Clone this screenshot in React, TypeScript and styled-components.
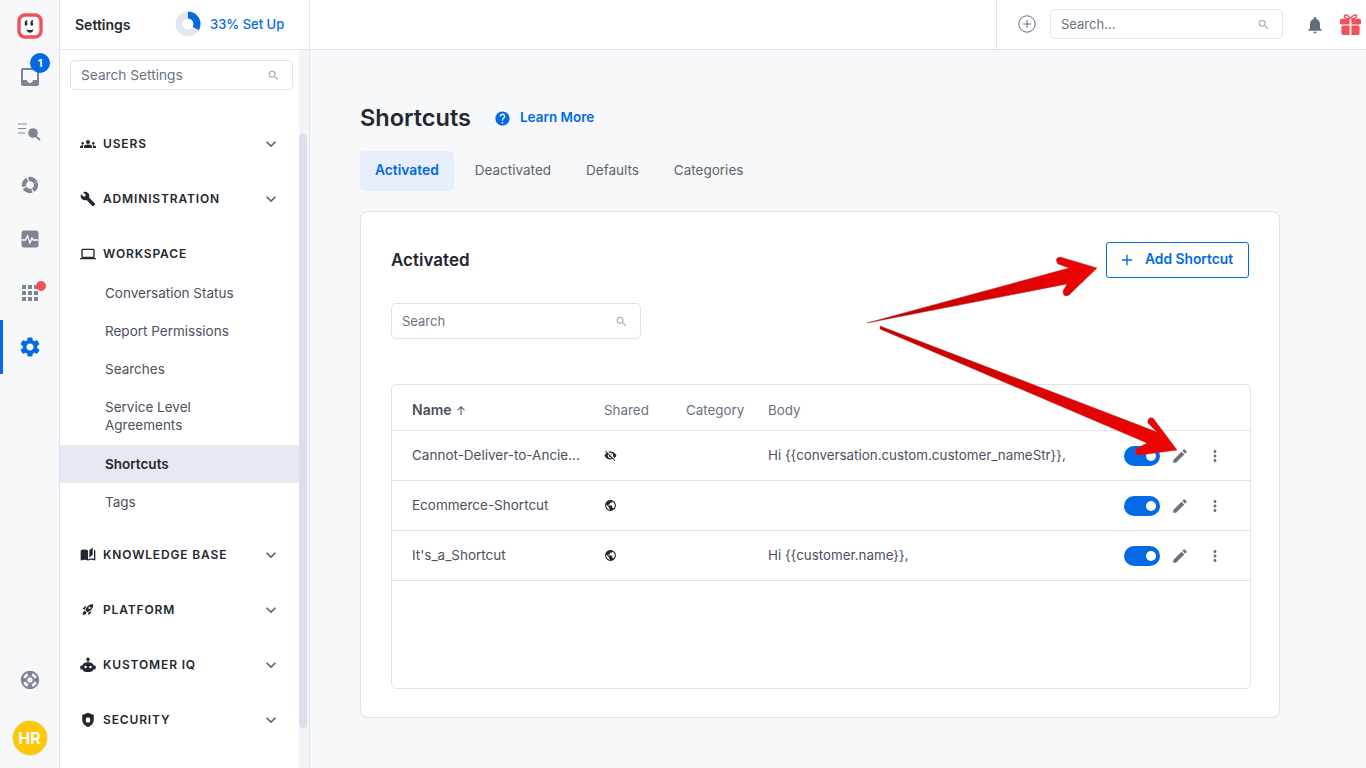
import React from 'react';
import styled, { createGlobalStyle } from 'styled-components';
import {
  MdApps,
  MdAutoStories,
  MdBuild,
  MdEdit,
  MdExpandMore,
  MdGroups,
  MdHelp,
  MdInbox,
  MdLaptop,
  MdMoreVert,
  MdNotifications,
  MdPublic,
  MdRocketLaunch,
  MdSearch,
  MdSettings,
  MdSupport,
  MdVisibilityOff,
} from 'react-icons/md';

const GlobalStyle = createGlobalStyle`
  html, body {
    margin: 0;
    padding: 0;
    height: 100%;
    overflow: hidden;
  }
  body {
    font-family: Inter, "Noto Sans", "Liberation Sans", sans-serif;
    background: #f7f8fa;
    color: #23272f;
  }
  * { box-sizing: border-box; }
`;

const BLUE = '#0369e5';
const CORAL = '#f4505a';

const rows = [
  { name: 'Cannot-Deliver-to-Ancie...', hidden: true, body: 'Hi {{conversation.custom.customer_nameStr}},' },
  { name: 'Ecommerce-Shortcut', hidden: false, body: '' },
  { name: "It's_a_Shortcut", hidden: false, body: 'Hi {{customer.name}},' },
];

const App: React.FC = () => {
  return (
    <Page>
      <GlobalStyle />
      <Rail>
        <RailTop>
          <Logo viewBox="0 0 26 26">
            <rect x="2" y="2" width="22" height="22" rx="6" fill="#fff" stroke={CORAL} strokeWidth="3.400" />
            <path d="M7.800 10c0-1.700 1-2.800 2.500-3v1.500c-.5.100-.8.400-.8.900h.8v3H7.800zM13.500 10c0-1.700 1-2.800 2.500-3v1.500c-.5.100-.8.400-.8.900h.8v3h-2.500z" fill="#23272f" />
            <path d="M9.500 16.500c2.200.8 4.800.8 7 0-.3 2-1.700 3.200-3.500 3.200s-3.200-1.200-3.500-3.200z" fill="#23272f" />
          </Logo>
          <RailItem>
            <MdInbox size={24} />
            <CountBadge>1</CountBadge>
          </RailItem>
          <RailItem>
            <RailSvg $w={24} $h={20} viewBox="0 0 24 20">
              <path d="M0 3h9M0 7.500h8M0 12h7" stroke="#7d8594" strokeWidth="1" fill="none" />
              <circle cx="15" cy="12" r="4.800" fill="#7d8594" />
              <path d="M18 15.500l4 3.500" stroke="#7d8594" strokeWidth="1.800" fill="none" />
            </RailSvg>
          </RailItem>
          <RailItem>
            <RailSvg $w={20} $h={20} viewBox="0 0 20 20">
              <circle cx="10" cy="10" r="6" fill="none" stroke="#7d8594" strokeWidth="4.400" strokeDasharray="8 1.420" transform="rotate(-20 10 10)" />
            </RailSvg>
          </RailItem>
          <RailItem>
            <RailSvg $w={18} $h={18} viewBox="0 0 18 18">
              <rect x="0.500" y="0.500" width="17" height="17" rx="2.500" fill="#7d8594" />
              <path d="M1 10h3.500l2-4 2.500 7 2-5 1.200 2H17" fill="none" stroke="#fff" strokeWidth="1.300" />
            </RailSvg>
          </RailItem>
          <RailItem>
            <MdApps size={24} />
            <RedDot />
          </RailItem>
          <RailItem $active><MdSettings size={24} /></RailItem>
        </RailTop>
        <RailBottom>
          <MdSupport size={22} color="#7d8594" />
          <Avatar>HR</Avatar>
        </RailBottom>
      </Rail>

      <SettingsPanel>
        <PanelHeader>
          <PanelTitle>Settings</PanelTitle>
          <Progress viewBox="0 0 26 26">
            <circle cx="13" cy="13" r="9" fill="none" stroke="#e3e7ef" strokeWidth="7" />
            <circle cx="13" cy="13" r="9" fill="none" stroke={BLUE} strokeWidth="7" strokeDasharray="18.700 56.500" transform="rotate(-90 13 13)" />
          </Progress>
          <SetupLink>33% Set Up</SetupLink>
        </PanelHeader>
        <PanelBody>
          <NavColumn>
            <SearchBox $width="223px" $height="30px" $margin="10px 0 0 10px" $size="13.7px">
              <span>Search Settings</span>
              <MdSearch size={13} color="#a3a9b5" />
            </SearchBox>
            <Nav>
              <NavHead><MdGroups size={18} /><span>USERS</span><MdExpandMore size={20} /></NavHead>
              <NavHead><MdBuild size={16} /><span>ADMINISTRATION</span><MdExpandMore size={20} /></NavHead>
              <NavHead><MdLaptop size={18} /><span>WORKSPACE</span></NavHead>
              <SubNav>
                <SubItem>Conversation Status</SubItem>
                <SubItem>Report Permissions</SubItem>
                <SubItem>Searches</SubItem>
                <SubItem $tall>Service Level<br />Agreements</SubItem>
                <SubItem $active>Shortcuts</SubItem>
                <SubItem>Tags</SubItem>
              </SubNav>
              <NavHead><MdAutoStories size={17} /><span>KNOWLEDGE BASE</span><MdExpandMore size={20} /></NavHead>
              <NavHead><MdRocketLaunch size={13} /><span>PLATFORM</span><MdExpandMore size={20} /></NavHead>
              <NavHead>
                <NavSvg viewBox="0 0 16 16">
                  <circle cx="8" cy="2.200" r="1.700" fill="#23272f" />
                  <rect x="7.400" y="3" width="1.200" height="3" fill="#23272f" />
                  <rect x="2" y="5.500" width="12" height="9.500" rx="4.400" fill="#23272f" />
                  <rect x="0.300" y="8.500" width="2.200" height="4" rx="1" fill="#23272f" />
                  <rect x="13.500" y="8.500" width="2.200" height="4" rx="1" fill="#23272f" />
                  <circle cx="5.600" cy="10" r="1.200" fill="#fff" />
                  <circle cx="10.400" cy="10" r="1.200" fill="#fff" />
                </NavSvg>
                <span>KUSTOMER IQ</span>
                <MdExpandMore size={20} />
              </NavHead>
              <NavHead>
                <NavSvg viewBox="0 0 16 16">
                  <path d="M8 .8l5.800 2.100v4.700c0 3.600-2.400 6.200-5.800 7.600-3.400-1.400-5.800-4-5.800-7.600V2.900z" fill="#23272f" />
                  <rect x="5.800" y="5.600" width="4.400" height="5" rx="1.500" fill="#fff" />
                </NavSvg>
                <span>SECURITY</span>
                <MdExpandMore size={20} />
              </NavHead>
            </Nav>
          </NavColumn>
          <ScrollTrack>
            <ScrollThumb />
          </ScrollTrack>
        </PanelBody>
      </SettingsPanel>

      <Main>
        <TopBar>
          <TopActions>
            <PlusCircle viewBox="0 0 18 18">
              <circle cx="9" cy="9" r="8.200" fill="none" stroke="#6b7280" strokeWidth="1" />
              <path d="M9 5v8M5 9h8" stroke="#6b7280" strokeWidth="1" />
            </PlusCircle>
            <SearchBox $width="233px" $height="30px">
              <span>Search...</span>
              <MdSearch size={13} color="#a3a9b5" />
            </SearchBox>
            <BellSlot><MdNotifications size={20} color="#626a7c" /></BellSlot>
            <GiftIcon viewBox="0 0 22 22">
              <path d="M11 5C9 1 5 0 4.500 2S8 5 11 5zM11 5c2-4 6-5 6.500-3S14 5 11 5z" fill="none" stroke={CORAL} strokeWidth="1.500" />
              <rect x="0" y="5" width="22" height="6" rx="1.500" fill={CORAL} />
              <rect x="1.500" y="12" width="19" height="10" rx="1.800" fill={CORAL} />
              <rect x="10" y="5" width="2" height="17" fill="#fff" />
            </GiftIcon>
          </TopActions>
        </TopBar>

        <Content>
          <TitleRow>
            <PageTitle>Shortcuts</PageTitle>
            <MdHelp size={17} color={BLUE} />
            <LearnMore>Learn More</LearnMore>
          </TitleRow>
          <Tabs>
            <Tab $active>Activated</Tab>
            <Tab>Deactivated</Tab>
            <Tab>Defaults</Tab>
            <Tab>Categories</Tab>
          </Tabs>

          <Card>
            <CardHead>
              <CardTitle>Activated</CardTitle>
              <AddButton>
                <PlusGlyph viewBox="0 0 14 14">
                  <path d="M7 1v12M1 7h12" stroke={BLUE} strokeWidth="1.600" />
                </PlusGlyph>
                Add Shortcut
              </AddButton>
            </CardHead>
            <SearchBox $width="250px" $height="36px" $margin="25px 0 0">
              <span>Search</span>
              <MdSearch size={13} color="#a3a9b5" />
            </SearchBox>

            <TableBox>
              <HeadRow>
                <NameHead>Name <SortArrow>↑</SortArrow></NameHead>
                <HeadCell $width="82px">Shared</HeadCell>
                <HeadCell $width="82px">Category</HeadCell>
                <HeadCell>Body</HeadCell>
              </HeadRow>
              {rows.map((row) => (
                <Row key={row.name}>
                  <NameCell>{row.name}</NameCell>
                  <SharedCell>
                    {row.hidden ? <MdVisibilityOff size={13} /> : <MdPublic size={13} />}
                  </SharedCell>
                  <CategoryCell />
                  <BodyCell>{row.body}</BodyCell>
                  <Toggle><Knob /></Toggle>
                  <EditIcon><MdEdit size={18} /></EditIcon>
                  <MoreIcon><MdMoreVert size={18} /></MoreIcon>
                </Row>
              ))}
            </TableBox>
          </Card>
        </Content>
      </Main>

      <Arrows viewBox="0 0 1366 768">
        <defs>
          <linearGradient id="arrowTop" x1="867" y1="324" x2="1100" y2="260" gradientUnits="userSpaceOnUse">
            <stop offset="0" stopColor="#c00000" />
            <stop offset="1" stopColor="#f00404" />
          </linearGradient>
          <linearGradient id="arrowBottom" x1="880" y1="328" x2="1180" y2="450" gradientUnits="userSpaceOnUse">
            <stop offset="0" stopColor="#c40000" />
            <stop offset="1" stopColor="#f00404" />
          </linearGradient>
        </defs>
        <path
          d="M867 323 L1069 268 L1058 264 Q1054 258 1060 257 L1097 268 L1069 295 Q1063 298 1063 291 L1067 284 Z"
          fill="url(#arrowTop)"
          stroke="#a83030"
          strokeWidth="0.500"
        />
        <path
          d="M880 326 L1157 432 L1148 423 Q1147 417 1153 418 L1177 450 L1140 455 Q1134 455 1136 449 L1147 443 L880 329 Z"
          fill="url(#arrowBottom)"
          stroke="#a83030"
          strokeWidth="0.500"
        />
      </Arrows>
    </Page>
  );
};

const Page = styled.div`
  display: flex;
  width: 1366px;
  height: 768px;
  overflow: hidden;
  position: relative;
`;

const Rail = styled.aside`
  width: 60px;
  flex: none;
  display: flex;
  flex-direction: column;
  justify-content: space-between;
  background: #f7f8fa;
  border-right: 1px solid #dfe2ea;
`;

const RailTop = styled.div`
  display: flex;
  flex-direction: column;
  padding-top: 13px;
`;

const Logo = styled.svg`
  width: 26px;
  height: 26px;
  margin: 0 0 11px 17px;
  flex: none;
`;

const RailItem = styled.div<{ $active?: boolean }>`
  position: relative;
  height: 54px;
  display: flex;
  align-items: center;
  justify-content: center;
  color: ${(props) => (props.$active ? BLUE : '#7d8594')};
  border-left: 3px solid ${(props) => (props.$active ? BLUE : 'transparent')};
  padding-right: 3px;
`;

const RailSvg = styled.svg<{ $w: number; $h: number }>`
  width: ${(props) => props.$w}px;
  height: ${(props) => props.$h}px;
`;

const CountBadge = styled.span`
  position: absolute;
  top: 3px;
  left: 27px;
  width: 20px;
  height: 20px;
  border-radius: 50%;
  background: ${BLUE};
  color: #fff;
  font-size: 11px;
  font-weight: 700;
  display: flex;
  align-items: center;
  justify-content: center;
`;

const RedDot = styled.span`
  position: absolute;
  top: 15px;
  left: 33px;
  width: 10px;
  height: 10px;
  border-radius: 50%;
  background: ${CORAL};
`;

const RailBottom = styled.div`
  display: flex;
  flex-direction: column;
  align-items: center;
  gap: 30px;
  padding-bottom: 13px;
`;

const Avatar = styled.div`
  width: 34px;
  height: 34px;
  border-radius: 50%;
  background: #ffc700;
  box-shadow: 0 0 0 1.500px #e8ebf1;
  color: #fff;
  font-size: 16px;
  font-weight: 700;
  display: flex;
  align-items: center;
  justify-content: center;
`;

const SettingsPanel = styled.aside`
  width: 250px;
  flex: none;
  display: flex;
  flex-direction: column;
  background: #fff;
  border-right: 1px solid #dfe2ea;
`;

const PanelHeader = styled.div`
  height: 50px;
  flex: none;
  display: flex;
  align-items: center;
  padding: 0 0 1px 15px;
  border-bottom: 1px solid #dfe2ea;
`;

const PanelTitle = styled.div`
  font-size: 14px;
  font-weight: 600;
  width: 100px;
`;

const Progress = styled.svg`
  width: 26px;
  height: 26px;
  flex: none;
`;

const SetupLink = styled.a`
  margin-left: 9px;
  font-size: 13px;
  font-weight: 500;
  color: ${BLUE};
`;

const PanelBody = styled.div`
  flex: 1;
  display: flex;
  min-height: 0;
`;

const NavColumn = styled.div`
  width: 239px;
  flex: none;
`;

const Nav = styled.nav`
  margin-top: 26px;
`;

const NavHead = styled.div`
  height: 55px;
  display: flex;
  align-items: center;
  padding: 0 18px 0 20px;
  color: #23272f;

  & > svg:first-child {
    width: 16px;
    margin-right: 2px;
    flex: none;
  }

  & > span {
    flex: 1;
    margin-left: 5px;
    font-size: 12px;
    font-weight: 600;
    letter-spacing: 0.85px;
  }

  & > svg:last-child:not(:first-child) {
    color: #5c6370;
    flex: none;
  }
`;

const NavSvg = styled.svg`
  height: 16px;
`;

const SubNav = styled.div`
  margin-top: -7px;
  padding-bottom: 6px;
`;

const SubItem = styled.div<{ $active?: boolean; $tall?: boolean }>`
  min-height: 38px;
  padding: ${(props) => (props.$tall ? '10px 0 11px 45px' : '0 0 1px 45px')};
  display: ${(props) => (props.$tall ? 'block' : 'flex')};
  align-items: center;
  font-size: 13.5px;
  line-height: 18px;
  color: ${(props) => (props.$active ? '#23272f' : '#4a5160')};
  font-weight: ${(props) => (props.$active ? 600 : 400)};
  background: ${(props) => (props.$active ? '#e6e9f2' : 'transparent')};
`;

const ScrollTrack = styled.div`
  width: 10px;
  flex: none;
  background: #f3f4f7;
  padding-top: 84px;
`;

const ScrollThumb = styled.div`
  width: 8px;
  height: 594px;
  background: #dbdfe7;
  border-radius: 4px;
`;

const Main = styled.main`
  flex: 1;
  display: flex;
  flex-direction: column;
  min-width: 0;
`;

const TopBar = styled.header`
  height: 50px;
  flex: none;
  display: flex;
  justify-content: flex-end;
  background: #fff;
  border-bottom: 1px solid #dfe2ea;
`;

const TopActions = styled.div`
  width: 370px;
  display: flex;
  align-items: center;
  padding: 0 0 1px 21px;
  border-left: 1px solid #dfe2ea;
`;

const PlusCircle = styled.svg`
  width: 18px;
  height: 18px;
  margin-right: 14px;
  flex: none;
`;

const BellSlot = styled.div`
  margin: 2px 15px 0 22px;
  display: flex;
`;

const GiftIcon = styled.svg`
  width: 21px;
  height: 21px;
  flex: none;
`;

const SearchBox = styled.div<{ $width: string; $height: string; $margin?: string; $size?: string }>`
  width: ${(props) => props.$width};
  height: ${(props) => props.$height};
  margin: ${(props) => props.$margin || '0'};
  flex: none;
  display: flex;
  align-items: center;
  justify-content: space-between;
  padding: 0 12px 0 10px;
  background: #fff;
  border: 1px solid #dfe2ea;
  border-radius: 5px;
  font-size: ${(props) => props.$size || '13px'};
  color: #6b7280;
`;

const Content = styled.div`
  flex: 1;
  padding: 54px 86px 0 50px;
`;

const TitleRow = styled.div`
  display: flex;
  align-items: center;
  height: 28px;
`;

const PageTitle = styled.h1`
  margin: 0 23px 1px 0;
  font-size: 23.5px;
  font-weight: 600;
  color: #23272f;
`;

const LearnMore = styled.a`
  margin: 0 0 2px 9px;
  font-size: 13.5px;
  font-weight: 600;
  color: ${BLUE};
`;

const Tabs = styled.div`
  display: flex;
  margin-top: 19px;
`;

const Tab = styled.div<{ $active?: boolean }>`
  height: 40px;
  padding: 0 15px 2px;
  margin-right: ${(props) => (props.$active ? '6px' : '5px')};
  display: flex;
  align-items: center;
  border-radius: 5px;
  font-size: ${(props) => (props.$active ? '13.8px' : '13.5px')};
  font-weight: ${(props) => (props.$active ? 600 : 400)};
  color: ${(props) => (props.$active ? BLUE : '#5c6370')};
  background: ${(props) => (props.$active ? '#e6eefc' : 'transparent')};
`;

const Card = styled.section`
  margin-top: 20px;
  width: 920px;
  height: 507px;
  padding: 30px 30px 0;
  background: #fff;
  border: 1px solid #dfe2ea;
  border-radius: 8px;
`;

const CardHead = styled.div`
  display: flex;
  align-items: center;
  justify-content: space-between;
  height: 36px;
`;

const CardTitle = styled.h2`
  margin: 0;
  font-size: 17px;
  font-weight: 600;
`;

const AddButton = styled.button`
  width: 143px;
  height: 36px;
  display: flex;
  align-items: center;
  padding: 0 0 2px 14px;
  background: #fff;
  border: 1px solid ${BLUE};
  border-radius: 3px;
  font-family: inherit;
  font-size: 13.8px;
  font-weight: 600;
  color: ${BLUE};
`;

const PlusGlyph = styled.svg`
  width: 12px;
  height: 12px;
  margin: 2px 12px 0 0;
`;

const TableBox = styled.div`
  margin-top: 45px;
  width: 860px;
  height: 305px;
  border: 1px solid #dfe2ea;
  border-radius: 6px;
`;

const HeadRow = styled.div`
  height: 46px;
  display: flex;
  align-items: center;
  padding: 4px 0 0 20px;
  border-bottom: 1px solid #dfe2ea;
  font-size: 13.4px;
  color: #6b7280;
`;

const NameHead = styled.div`
  width: 192px;
  font-size: 14px;
  font-weight: 600;
  color: #4a5160;
`;

const SortArrow = styled.span`
  font-weight: 400;
  font-size: 12px;
  margin-left: 1px;
`;

const HeadCell = styled.div<{ $width?: string }>`
  width: ${(props) => props.$width || 'auto'};
`;

const Row = styled.div`
  height: 50px;
  display: flex;
  align-items: center;
  padding-left: 20px;
  border-bottom: 1px solid #dfe2ea;
  font-size: 13.5px;
  color: #4a5160;
`;

const NameCell = styled.div`
  width: 192px;
  flex: none;
  white-space: nowrap;
  margin-bottom: 1px;
`;

const SharedCell = styled.div`
  width: 82px;
  flex: none;
  display: flex;
  color: #23272f;
`;

const CategoryCell = styled.div`
  width: 82px;
  flex: none;
`;

const BodyCell = styled.div`
  width: 356px;
  flex: none;
  white-space: nowrap;
  font-size: 13.36px;
  margin-bottom: 1px;
`;

const Toggle = styled.div`
  width: 36px;
  height: 20px;
  flex: none;
  display: flex;
  align-items: center;
  justify-content: flex-end;
  padding-right: 4px;
  border-radius: 10px;
  background: ${BLUE};
`;

const Knob = styled.span`
  width: 10px;
  height: 10px;
  border-radius: 50%;
  background: #fff;
`;

const EditIcon = styled.div`
  margin-left: 11px;
  display: flex;
  color: #6b7280;
`;

const MoreIcon = styled.div`
  margin-left: 17px;
  display: flex;
  color: #6b7280;
`;

const Arrows = styled.svg`
  position: absolute;
  top: 0;
  left: 0;
  width: 1366px;
  height: 768px;
  pointer-events: none;
`;

export default App;
